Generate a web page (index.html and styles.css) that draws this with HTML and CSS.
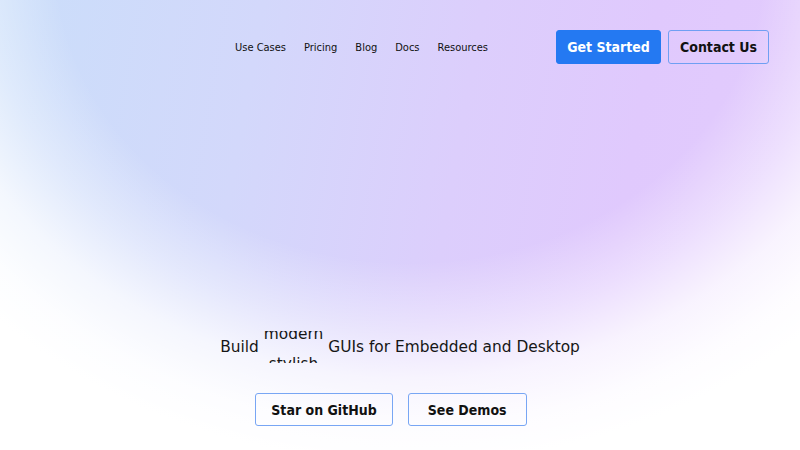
FILE: index.html
```html
<!DOCTYPE html>
<html lang="en">
<head>
<meta charset="utf-8">
<title>GUIs for Embedded and Desktop</title>
<link rel="stylesheet" href="styles.css">
</head>
<body>
<div class="page">
  <header class="header">
    <div class="logo"></div>
    <nav class="nav">
      <a href="#">Use Cases</a>
      <a href="#">Pricing</a>
      <a href="#">Blog</a>
      <a href="#">Docs</a>
      <a href="#">Resources</a>
    </nav>
    <div class="actions">
      <a class="btn btn-primary" href="#">Get Started</a>
      <a class="btn btn-outline" href="#">Contact Us</a>
    </div>
  </header>
  <main class="hero">
    <div class="tagline">
      <span>Build</span>
      <span class="rotator"><span class="words"><span>modern</span><span>stylish</span></span></span>
      <span>GUIs for Embedded and Desktop</span>
    </div>
    <div class="cta">
      <a class="btn btn-ghost" href="#">Star on GitHub</a>
      <a class="btn btn-ghost" href="#">See Demos</a>
    </div>
  </main>
</div>
</body>
</html>
```

FILE: styles.css
```css
* { box-sizing: border-box; }
html, body { margin: 0; padding: 0; }
body {
  font-family: "DejaVu Sans", sans-serif;
  color: #111;
  background: #fff;
}
a { text-decoration: none; color: inherit; }

.page {
  min-height: 450px;
  display: flex;
  flex-direction: column;
  background:
    radial-gradient(ellipse 620px 530px at 410px -40px,
      rgba(255,255,255,0) 0%,
      rgba(255,255,255,0) 57%,
      rgba(255,255,255,0.4) 69%,
      rgba(255,255,255,0.78) 79%,
      rgba(255,255,255,0.95) 88%,
      #fff 95%),
    linear-gradient(100deg, #cadefa 0%, #d3d8fb 30%, #dccefc 55%, #e0c9fd 75%, #e3ccfd 100%);
}

.header {
  display: flex;
  align-items: center;
  padding: 30px 31px 0 31px;
}
.logo { flex: 1; }
.nav {
  display: flex;
  gap: 18px;
  font-family: "DejaVu Sans Condensed", "DejaVu Sans", sans-serif;
  font-stretch: condensed;
  font-size: 11px;
  color: #111;
}
.actions {
  display: flex;
  gap: 7px;
  margin-left: 68px;
}

.btn {
  display: inline-flex;
  align-items: center;
  justify-content: center;
  white-space: nowrap;
  height: 34px;
  border: 1px solid #6f9ff3;
  border-radius: 3px;
  font-family: "DejaVu Sans Condensed", "DejaVu Sans", sans-serif;
  font-stretch: condensed;
  font-weight: bold;
  font-size: 14px;
  color: #111;
}
.btn-primary {
  background: #2479f2;
  border-color: #2479f2;
  color: #fff;
  width: 105px;
}
.btn-outline {
  width: 101px;
}
.btn-ghost {
  padding: 0 15px;
  min-width: 119px;
  height: 33px;
  border-color: #78a6f4;
}

.hero {
  display: flex;
  flex-direction: column;
  align-items: center;
  padding-top: 267px;
}
.tagline {
  display: flex;
  align-items: center;
  gap: 5px;
  font-size: 15.4px;
  color: #161616;
}
.rotator {
  display: block;
  height: 32px;
  overflow: hidden;
}
.words {
  display: flex;
  flex-direction: column;
  align-items: center;
  line-height: 30px;
  margin-top: -12px;
}
.cta {
  display: flex;
  gap: 15px;
  margin-top: 30px;
  margin-right: 18px;
}
```
